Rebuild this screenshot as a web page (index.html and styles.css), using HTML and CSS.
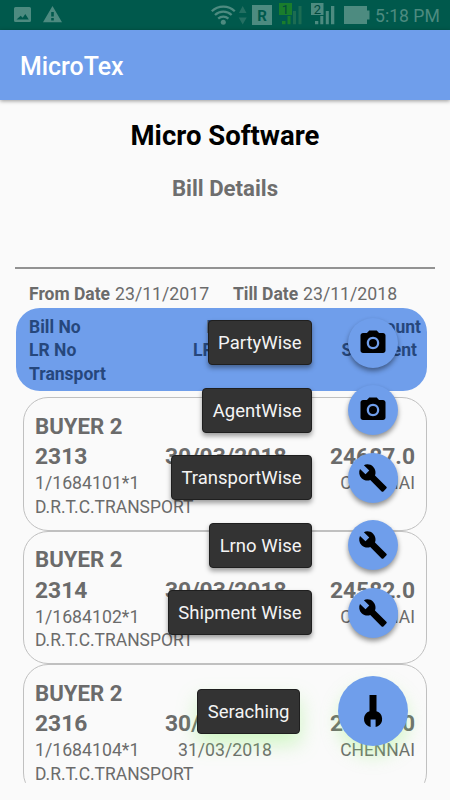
FILE: index.html
```html
<!DOCTYPE html>
<html lang="en">
<head>
<meta charset="utf-8">
<title>MicroTex</title>
<link rel="stylesheet" href="styles.css">
</head>
<body>
<svg class="defs" aria-hidden="true">
  <symbol id="camera" viewBox="0 0 24 24"><path fill-rule="evenodd" d="M9 2L7.17 4H4c-1.1 0-2 .9-2 2v12c0 1.1.9 2 2 2h16c1.1 0 2-.9 2-2V6c0-1.1-.9-2-2-2h-3.17L15 2H9zm3 15c-2.76 0-5-2.24-5-5s2.24-5 5-5 5 2.24 5 5-2.24 5-5 5z"/><circle cx="12" cy="12" r="3.2"/></symbol>
  <symbol id="build" viewBox="0 0 24 24"><path d="M22.7 19l-9.1-9.1c.9-2.3.4-5-1.5-6.9-2-2-5-2.4-7.4-1.3L9 6 6 9 1.6 4.7C.4 7.1.9 10.1 2.9 12.1c1.9 1.9 4.6 2.4 6.9 1.5l9.1 9.1c.4.4 1 .4 1.4 0l2.3-2.3c.5-.4.5-1.1.1-1.4z"/></symbol>
</svg>
<header class="status">
  <svg class="status-left" width="50" height="18" viewBox="0 0 50 18">
    <path fill-rule="evenodd" d="M1.500 1h14q1.500 0 1.500 1.500v12q0 1.500-1.500 1.500h-14Q0 16 0 14.500v-12Q0 1 1.500 1zM2.500 13.500h12.300l-3.500-5.500-2.600 3.700-2-2z"/>
    <path fill-rule="evenodd" d="M38.500 0L48 16.300H29zM37.200 6v4.500h2.600V6zM37.200 12v2.500h2.600V12z"/>
  </svg>
  <svg class="status-right" width="160" height="26" viewBox="210 1 160 26">
    <g fill="none" stroke="#4d8b80" stroke-width="2.300">
      <path d="M211.800 11.200a16.500 16.500 0 0 1 23 0"/><path d="M215 15a12 12 0 0 1 16.600 0"/><path d="M218.200 18.700a7.500 7.500 0 0 1 10.200 0"/>
    </g>
    <circle cx="223.300" cy="22.300" r="2.500"/>
    <path fill="#246f62" d="M242.700 6l3.800 7h-7.600zM242.700 24.500l-4-7h8z"/>
    <path d="M252 5h20v20h-20z"/>
    <text x="262" y="20.500" class="roam">R</text>
    <path fill="#1a7d2c" d="M279 3h13v12h-13z"/>
    <text x="285.500" y="14" class="sim sim-one">1</text>
    <path fill="#1a7d2c" d="M282 21h3.500v3.200H282zM287.500 16h3v8.200h-3z"/>
    <path fill="#1c6c52" d="M293 11h3v13.200h-3zM298.500 6h3v18.200h-3z"/>
    <path d="M311 3h12.500v12H311z"/>
    <text x="317.300" y="14" class="sim">2</text>
    <path d="M315 21h3.300v3.200H315zM320.300 16h3v8.200h-3zM325.800 11h3v13.200h-3zM331 6h3.300v18.200H331z"/>
    <path d="M344 6h23v4.500h2.500v9H367V24h-23z"/>
  </svg>
  <span class="clock">5:18 PM</span>
</header>
<div class="appbar">MicroTex</div>
<main>
  <h1>Micro Software</h1>
  <h2>Bill Details</h2>
  <div class="rule"></div>
  <div class="dates">
    <b class="from">From Date</b><span class="from-value">23/11/2017</span>
    <b class="till">Till Date</b><span>23/11/2018</span>
  </div>
  <section class="heading">
    <div><span>Bill No</span><span class="mid">Date</span><span>Amount</span></div>
    <div><span>LR No</span><span class="mid lr">LR Date</span><span class="ship">Shipment</span></div>
    <div><span>Transport</span></div>
  </section>
  <section class="list">
    <article>
      <div class="big buyer">BUYER 2</div>
      <div class="big row"><span>2313</span><span class="date">30/03/2018</span><span>24687.0</span></div>
      <div class="small row"><span class="lrno">1/1684101*1</span><span class="date">31/03/2018</span><span>CHENNAI</span></div>
      <div class="small">D.R.T.C.TRANSPORT</div>
    </article>
    <article>
      <div class="big buyer">BUYER 2</div>
      <div class="big row"><span>2314</span><span class="date">30/03/2018</span><span>24582.0</span></div>
      <div class="small row"><span class="lrno">1/1684102*1</span><span class="date">31/03/2018</span><span>CHENNAI</span></div>
      <div class="small">D.R.T.C.TRANSPORT</div>
    </article>
    <article>
      <div class="big buyer">BUYER 2</div>
      <div class="big row"><span>2316</span><span class="date">30/03/2018</span><span>24640.0</span></div>
      <div class="small row"><span class="lrno">1/1684104*1</span><span class="date">31/03/2018</span><span>CHENNAI</span></div>
      <div class="small">D.R.T.C.TRANSPORT</div>
    </article>
  </section>
</main>
<nav class="menu">
  <div class="action"><span class="label">PartyWise</span><span class="fab"><svg><use href="#camera"/></svg></span></div>
  <div class="action"><span class="label">AgentWise</span><span class="fab"><svg><use href="#camera"/></svg></span></div>
  <div class="action"><span class="label">TransportWise</span><span class="fab"><svg><use href="#build"/></svg></span></div>
  <div class="action"><span class="label">Lrno Wise</span><span class="fab"><svg><use href="#build"/></svg></span></div>
  <div class="action"><span class="label">Shipment Wise</span><span class="fab"><svg><use href="#build"/></svg></span></div>
  <div class="action main-action"><span class="label">Seraching</span><span class="fab"><svg viewBox="0 0 30 36"><path d="M11.500 2h7v16.200a8.200 8.200 0 0 1 1.300 15l-2.200.8V26.500h-5V34l-2.200-.8a8.200 8.200 0 0 1 1.100-15z"/></svg></span></div>
</nav>
</body>
</html>
```
FILE: styles.css
```css
* { box-sizing: border-box; }
body { margin: 0; width: 450px; height: 800px; overflow: hidden; position: relative; background: #fafafa; color: #6b6b6b; font-family: Roboto, sans-serif; }
.defs { display: none; }
.status { height: 30px; background: #00594c; display: flex; align-items: center; fill: #4d8b80; color: #4d8b80; padding: 0 11px 0 14px; }
.status-left { margin-top: 0; }
.status-right { margin: -2px 5px 0 auto; }
.clock { font-size: 17.600px; line-height: 30px; width: 64px; white-space: nowrap; padding-top: 1px; }
.roam { font: bold 15px Roboto, sans-serif; fill: #00594c; text-anchor: middle; }
.sim { font: 13px Roboto, sans-serif; fill: #00483d; text-anchor: middle; }
.appbar { height: 70px; background: #6f9eeb; color: #fff; font-size: 24.900px; font-weight: 500; line-height: 73px; padding-left: 20px; box-shadow: 0 1px 4px rgba(0,0,0,.4); }
h1 { margin: 16px 0 0; font-size: 27.500px; line-height: 40px; color: #000; text-align: center; }
h2 { margin: 16px 0 0; font-size: 22.200px; line-height: 32px; text-align: center; color: #6e6e6e; }
.rule { margin: 63px 15px 0; height: 2px; background: #929292; }
.dates { height: 38.500px; padding: 13px 0 0 29px; display: flex; font-size: 17.700px; line-height: 24px; white-space: nowrap; }
.dates b { font-size: 17.500px; }
.from { width: 86px; }
.from-value { width: 118px; }
.till { width: 70px; }
.heading { margin: 0 23px 0 16px; height: 83.500px; border-radius: 24px; background: #6f9eeb; color: #26477c; padding: 8px 6px 0 13px; font-size: 17.500px; font-weight: bold; line-height: 23.800px; }
.heading div { display: grid; grid-template-columns: 164px 100px 1fr; }
.heading span { white-space: nowrap; }
.heading span:last-child:not(:first-child) { text-align: right; }
.heading .mid { padding-left: 13.500px; }
.heading .lr { padding-left: 0; }
.ship { padding-right: 4px; }
.list { margin: 6px 23px 0; height: 386px; overflow: hidden; }
article { height: 133.500px; border: 1px solid #c0c0c0; border-radius: 25px; padding: 12.800px 11px 0; white-space: nowrap; }
.big { font-size: 22.800px; line-height: 31px; font-weight: bold; }
.buyer { font-size: 22.200px; line-height: 30.500px; }
.small { font-size: 17.450px; line-height: 23.600px; }
.small .date, .lrno { font-size: 17.700px; }
.row { display: grid; grid-template-columns: 1fr 120px 1fr; }
.row span:last-child { text-align: right; }
.date { text-align: center; }
.menu { position: absolute; right: 42.500px; top: 317.500px; display: flex; flex-direction: column; gap: 17.500px; align-items: flex-end; }
.action { display: flex; align-items: center; gap: 35.500px; margin-right: 10px; }
.label { height: 45px; padding: 0 9.500px; background: #333; color: #f4f4f4; border: 1px solid #1f1f1f; border-radius: 4px; line-height: 44px; font-size: 18.500px; box-shadow: 0 3px 5px rgba(0,0,0,.38); white-space: nowrap; }
.fab { width: 50px; height: 50px; border-radius: 50%; background: #6f9eeb; display: flex; align-items: center; justify-content: center; box-shadow: 0 3px 5px rgba(0,0,0,.42); }
.fab svg { width: 30px; height: 30px; }
.main-action { margin: 21px 0 0; gap: 37.500px; }
.main-action .label { box-shadow: 0 10px 20px rgba(145,240,115,.4); }
.main-action .fab { width: 70px; height: 70px; box-shadow: 0 10px 18px rgba(145,240,115,.35); }
.main-action svg { width: 30px; height: 36px; }
```
